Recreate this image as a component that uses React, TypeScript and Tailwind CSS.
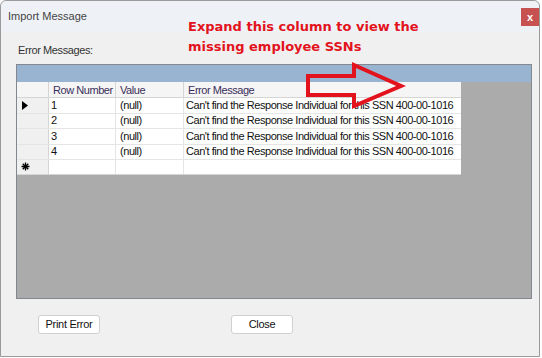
import React from "react";

const rows = [1, 2, 3, 4];

const ImportMessage: React.FC = () => {
  return (
    <div className="w-[542px] h-[358px] bg-white font-['Liberation_Sans',Arial,sans-serif] overflow-hidden">
      <div className="relative w-[540px] h-[357px] border border-[#9a9a9a] rounded-t-[6px] bg-[#f0f0f0] flex flex-col">
        {/* title bar */}
        <div className="h-[31px] bg-[#eef2f7] flex items-start justify-between pl-[7px] rounded-t-[6px]">
          <span className="mt-[7px] text-[11px] text-[#444]">Import Message</span>
          <div className="mt-[7px] w-[18px] h-[18px] bg-[#c75050] flex items-center justify-center text-white text-[11px] font-bold leading-none">
            x
          </div>
        </div>

        <div className="pl-[17px] mt-[10px] text-[11px] tracking-[-0.4px] text-[#333]">Error Messages:</div>

        {/* grid */}
        <div className="ml-[15px] mt-[5px] w-[516px] h-[235px] bg-[#ababab] border border-[#828790] flex flex-col">
          <div className="h-[17px] bg-[#99b4d1]" />
          <div className="w-[444px] bg-white text-[11px] tracking-[-0.45px] text-[#111] whitespace-nowrap">
            <div className="flex h-[16px] bg-[#f5f5f5] border-b border-[#d5d5d5]">
              <div className="w-[32px] border-r border-[#d5d5d5]" />
              <div className="w-[67px] border-r border-[#d5d5d5] pl-[4px] leading-[16px] text-[#3a2f5a]">Row Number</div>
              <div className="w-[68px] border-r border-[#d5d5d5] pl-[4px] leading-[16px] text-[#3a2f5a]">Value</div>
              <div className="flex-1 pl-[4px] leading-[16px] text-[#3a2f5a]">Error Message</div>
            </div>
            {rows.map((r) => (
              <div key={r} className={`flex border-b border-[#e5e5e5] ${r % 2 === 1 ? "h-[16px]" : "h-[15px]"}`}>
                <div className="w-[32px] bg-[#f0f0f0] border-r border-[#d5d5d5] flex items-center pl-[5px]">
                  {r === 1 && (
                    <svg width="6" height="9" viewBox="0 0 6 9">
                      <path d="M0 0 L6 4.5 L0 9 Z" fill="#000" />
                    </svg>
                  )}
                </div>
                <div className="w-[67px] border-r border-[#e5e5e5] pl-[2px] flex items-center">{r}</div>
                <div className="w-[68px] border-r border-[#e5e5e5] pl-[4px] flex items-center">(null)</div>
                <div className="flex-1 pl-[2px] flex items-center overflow-hidden">
                  Can't find the Response Individual for this SSN 400-00-1016
                </div>
              </div>
            ))}
            <div className="flex h-[15px] border-b border-[#d5d5d5]">
              <div className="w-[32px] bg-[#f0f0f0] border-r border-[#d5d5d5] pl-[4px] flex items-center">
                <svg width="9" height="9" viewBox="0 0 9 9" stroke="#000" strokeWidth="1.3">
                  <path d="M4.5 0.5 V8.5 M0.5 4.5 H8.5 M1.7 1.7 L7.3 7.3 M7.3 1.7 L1.7 7.3" />
                </svg>
              </div>
              <div className="w-[67px] border-r border-[#e5e5e5]" />
              <div className="w-[68px] border-r border-[#e5e5e5]" />
              <div className="flex-1" />
            </div>
          </div>
        </div>

        {/* buttons */}
        <div className="flex mt-[16px] pl-[37px] gap-[131px] text-[11px] tracking-[-0.3px] text-[#111]">
          <button className="w-[62px] h-[19px] bg-white border border-[#d0d0d0] rounded-[3px]">Print Error</button>
          <button className="w-[62px] h-[19px] bg-white border border-[#d0d0d0] rounded-[3px]">Close</button>
        </div>

        {/* annotation */}
        <div className="absolute left-[187px] top-[16px] font-['DejaVu_Sans',Verdana,sans-serif] text-[13px] leading-[20px] font-bold text-[#e3131d]">
          <div>Expand this column to view the</div>
          <div>missing employee SSNs</div>
        </div>
        <svg className="absolute left-[300px] top-[56px]" width="110" height="56" viewBox="300 56 110 56">
          <path
            d="M307 75 L353 75 L353 64 L400 85 L353 105 L353 94 L307 94 Z"
            fill="none"
            stroke="#e3131d"
            strokeWidth="4"
            strokeLinejoin="miter"
          />
        </svg>
      </div>
    </div>
  );
};

export default function App() {
  return <ImportMessage />;
}
